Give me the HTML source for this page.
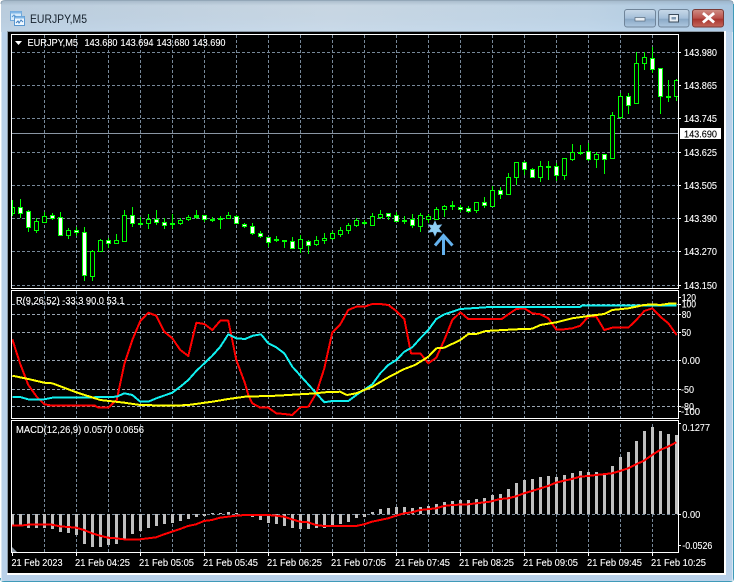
<!DOCTYPE html>
<html><head><meta charset="utf-8"><title>EURJPY,M5</title>
<style>html,body{margin:0;padding:0;background:#fff;width:736px;height:583px;overflow:hidden}svg{display:block}
text{font-family:"Liberation Sans",sans-serif;font-size:10.5px;fill:#fff;stroke:#fff;stroke-width:.12}</style></head><body>
<svg width="736" height="583" viewBox="0 0 736 583" xmlns="http://www.w3.org/2000/svg">
<defs>
<linearGradient id="h" x1="0" x2="1" y1="0" y2="0"><stop offset="0" stop-color="#c2d4e4"/><stop offset=".45" stop-color="#d3e0eb"/><stop offset=".8" stop-color="#c6dbec"/><stop offset="1" stop-color="#aecde8"/></linearGradient>
<linearGradient id="v" x1="0" x2="0" y1="0" y2="1"><stop offset="0" stop-color="#8fa3b5" stop-opacity=".55"/><stop offset=".15" stop-color="#8fa3b5" stop-opacity=".15"/><stop offset="1" stop-color="#b9d1ea" stop-opacity=".35"/></linearGradient>
<linearGradient id="btn" x1="0" x2="0" y1="0" y2="1"><stop offset="0" stop-color="#c8d9e9"/><stop offset=".5" stop-color="#a4bed8"/><stop offset=".55" stop-color="#8aa8c6"/><stop offset="1" stop-color="#aec8e0"/></linearGradient>
<linearGradient id="cls" x1="0" x2="0" y1="0" y2="1"><stop offset="0" stop-color="#cf8f86"/><stop offset=".5" stop-color="#b9504a"/><stop offset=".55" stop-color="#a8352e"/><stop offset="1" stop-color="#c4685c"/></linearGradient>
<clipPath id="pc"><rect x="12" y="421" width="666" height="131"/></clipPath>
</defs>
<rect x="1" y="1" width="732" height="580" rx="4" fill="#b9d1ea"/>
<rect x="1" y="1" width="732" height="31" fill="url(#h)"/>
<rect x="1" y="1" width="732" height="31" fill="url(#v)"/>
<path d="M1 4Q1 .5 5 .5H729Q733 .5 733 4" fill="none" stroke="#93a7b8"/>
<path d="M.5 578Q.5 581.500 4 581.500H730Q733.500 581.500 733.500 578V4" fill="none" stroke="#3f9ab8"/>
<rect x="1" y="32" width="1" height="549" fill="#d8e6f2"/>
<rect x="732" y="32" width="1" height="549" fill="#d8e6f2"/>
<rect x="7" y="31" width="719" height="544" fill="#fff"/>
<rect x="7" y="31" width="717" height="542" fill="#000"/>
<rect x="7" y="31" width="1" height="542" fill="#8a98a4"/>
<rect x="7" y="31" width="717" height="1" fill="#8a98a4"/>

<!-- title bar icon -->
<g shape-rendering="crispEdges">
<rect x="10.5" y="11.5" width="11" height="9" fill="#d6ebfb" stroke="#6fa7d8"/>
<rect x="10.5" y="11.5" width="11" height="2" fill="#7fb6e6"/>
<rect x="14.5" y="16.5" width="10" height="9" fill="#eef7ff" stroke="#5a97cf"/>
<rect x="14.5" y="16.5" width="10" height="2" fill="#7fb6e6"/>
</g>
<path d="M16 23l2-2 1 2 2-3 2 2" fill="none" stroke="#3f7fbf"/>
<path d="M12 17l2-2 2 2" fill="none" stroke="#5a97cf"/>
<text x="30" y="23" textLength="57" lengthAdjust="spacingAndGlyphs" style="font-size:12px;fill:#15202c;stroke:none">EURJPY,M5</text>

<!-- buttons -->
<rect x="624.5" y="9.5" width="31" height="17.5" rx="2.5" fill="url(#btn)" stroke="#6f8499"/>
<rect x="658.5" y="9.5" width="30.5" height="17.5" rx="2.5" fill="url(#btn)" stroke="#6f8499"/>
<rect x="692.5" y="9.5" width="31" height="17.5" rx="2.5" fill="url(#cls)" stroke="#7a3a36"/>
<rect x="635" y="17.5" width="10" height="3.5" fill="#e8eef4" stroke="#56687a" stroke-width=".7"/>
<rect x="669" y="14.5" width="9.5" height="7.5" fill="#e8eef4" stroke="#3c4c5c"/>
<rect x="671.5" y="17" width="4.5" height="2.5" fill="#7f98b0"/>
<path d="M704 14l9 7.500M713 14l-9 7.500" stroke="#fff" stroke-width="2.800" stroke-linecap="square"/>

<!-- grid -->
<g fill="none" stroke="#778899" stroke-dasharray="3 2" shape-rendering="crispEdges">
<path d="M44.500 35V288M76.500 35V288M108.500 35V288M140.500 35V288M172.500 35V288M204.500 35V288M236.500 35V288M268.500 35V288M300.500 35V288M332.500 35V288M364.500 35V288M396.500 35V288M428.500 35V288M460.500 35V288M492.500 35V288M524.500 35V288M556.500 35V288M588.500 35V288M620.500 35V288M652.500 35V288"/>
<path d="M44.500 291V418M76.500 291V418M108.500 291V418M140.500 291V418M172.500 291V418M204.500 291V418M236.500 291V418M268.500 291V418M300.500 291V418M332.500 291V418M364.500 291V418M396.500 291V418M428.500 291V418M460.500 291V418M492.500 291V418M524.500 291V418M556.500 291V418M588.500 291V418M620.500 291V418M652.500 291V418"/>
<path d="M44.500 424V552M76.500 424V552M108.500 424V552M140.500 424V552M172.500 424V552M204.500 424V552M236.500 424V552M268.500 424V552M300.500 424V552M332.500 424V552M364.500 424V552M396.500 424V552M428.500 424V552M460.500 424V552M492.500 424V552M524.500 424V552M556.500 424V552M588.500 424V552M620.500 424V552M652.500 424V552"/>
<path d="M12 52.500H678M12 85.500H678M12 118.500H678M12 152.500H678M12 185.500H678M12 218.500H678M12 251.500H678M12 285.500H678"/>
<path stroke="#9aa6b2" d="M12 304.500H678M12 314.500H678M12 332.500H678M12 360.500H678M12 389.500H678M12 406.500H678"/>
<path d="M12 514.500H678"/>
</g>
<path d="M12 133.500H678" stroke="#8a96a4" shape-rendering="crispEdges"/>

<!-- candles -->
<g shape-rendering="crispEdges" stroke="#00ff00" fill="none">
<path d="M12.500 200V216M20.500 199V218M28.500 210V232M36.500 218V233M44.500 212V223M52.500 213V220M60.500 212V236M68.500 228V239M76.500 227V236M84.500 227V281M92.500 250V281M100.500 239V252M108.500 238V248M116.500 234V243M124.500 210V241M132.500 207V227M140.500 217V225M148.500 214V229M156.500 210V225M164.500 218V229M172.500 214V229M180.500 218V225M188.500 215V221M196.500 210V219M204.500 215V222M212.500 217V222M220.500 216V229M228.500 212V219M236.500 215V224M244.500 223V228M252.500 223V235M260.500 231V238M268.500 237V247M276.500 236V242M284.500 240V248M292.500 237V249M300.500 235V253M308.500 240V254M316.500 236V246M324.500 233V244M332.500 231V240M340.500 227V237M348.500 223V234M356.500 218V227M364.500 220V225M372.500 213V225M380.500 210V219M388.500 213V220M396.500 212V222M404.500 216V224M412.500 214V228M420.500 213V232M428.500 214V223M436.500 207V219M444.500 205V217M452.500 201V210M460.500 205V212M468.500 206V213M476.500 202V213M484.500 197V208M492.500 186V206M500.500 187V199M508.500 173V195M516.500 162V185M524.500 161V175M532.500 168V178M540.500 161V182M548.500 161V180M556.500 163V181M564.500 158V180M572.500 144V161M580.500 145V155M588.500 143V161M596.500 152V168M604.500 154V174M612.500 112V158M620.500 93V119M628.500 93V114M636.500 52V104M644.500 52V70M652.500 47V73M660.500 68V114M668.500 80V102M676.500 79V101"/>
<path fill="#000" d="M12.500 207.500h2v6h-2zM34.500 221.500h4v9h-4zM42.500 216.500h4v6h-4zM66.500 230.500h4v5h-4zM90.500 251.500h4v25h-4zM98.500 240.500h4v11h-4zM114.500 240.500h4v3h-4zM122.500 215.500h4v26h-4zM146.500 219.500h4v4h-4zM178.500 220.500h4v3h-4zM186.500 217.500h4v2h-4zM226.500 215.500h4v3h-4zM298.500 239.500h4v9h-4zM314.500 240.500h4v4h-4zM322.500 238.500h4v2h-4zM330.500 233.500h4v5h-4zM338.500 230.500h4v4h-4zM346.500 225.500h4v5h-4zM354.500 220.500h4v5h-4zM370.500 216.500h4v9h-4zM378.500 214.500h4v3h-4zM418.500 215.500h4v11h-4zM426.500 216.500h4v3h-4zM434.500 209.500h4v10h-4zM442.500 206.500h4v3h-4zM474.500 202.500h4v8h-4zM490.500 190.500h4v16h-4zM506.500 177.500h4v17h-4zM514.500 162.500h4v15h-4zM538.500 166.500h4v11h-4zM562.500 158.500h4v17h-4zM570.500 152.500h4v7h-4zM594.500 154.500h4v5h-4zM610.500 115.500h4v43h-4zM618.500 96.500h4v21h-4zM634.500 63.500h4v40h-4zM642.500 57.500h4v6h-4zM674.500 80.500h4v16h-4z"/>
<path fill="#fff" d="M18.500 207.500h4v6h-4zM26.500 211.500h4v16h-4zM50.500 215.500h4v3h-4zM58.500 217.500h4v18h-4zM74.500 230.500h4v2h-4zM82.500 232.500h4v43h-4zM106.500 240.500h4v3h-4zM130.500 215.500h4v8h-4zM154.500 219.500h4v3h-4zM162.500 222.500h4v3h-4zM202.500 215.500h4v4h-4zM210.500 219.500h4v1h-4zM234.500 216.500h4v7h-4zM242.500 224.500h4v2h-4zM250.500 226.500h4v7h-4zM258.500 233.500h4v3h-4zM266.500 237.500h4v5h-4zM290.500 241.500h4v7h-4zM306.500 241.500h4v4h-4zM362.500 222.500h4v1h-4zM386.500 213.500h4v3h-4zM394.500 215.500h4v6h-4zM410.500 219.500h4v6h-4zM458.500 207.500h4v2h-4zM466.500 208.500h4v3h-4zM482.500 202.500h4v3h-4zM498.500 190.500h4v4h-4zM522.500 162.500h4v7h-4zM530.500 169.500h4v8h-4zM554.500 166.500h4v9h-4zM586.500 151.500h4v8h-4zM602.500 154.500h4v5h-4zM626.500 96.500h4v9h-4zM650.500 58.500h4v11h-4zM658.500 68.500h4v28h-4z"/>
<path fill="#00ff00" d="M138.500 223.500h4v1h-4zM170.500 223.500h4v1h-4zM194.500 215.500h4v2h-4zM218.500 218.500h4v1h-4zM274.500 239.500h4v1h-4zM282.500 240.500h4v1h-4zM402.500 220.500h4v1h-4zM450.500 205.500h4v1h-4zM546.500 166.500h4v1h-4zM578.500 152.500h4v1h-4zM666.500 96.500h4v1h-4z"/>
</g>

<!-- star and arrow -->
<polygon points="435,221 436.900,225.300 441.600,224.800 438.800,228.500 441.600,232.200 436.900,231.700 435,236 433.100,231.700 428.400,232.200 431.200,228.500 428.400,224.800 433.100,225.300" fill="#8fd0f4" stroke="#7abcec" stroke-width=".6"/>
<path d="M435 245.500L443.500 235.500L452.500 245.500M443.500 236V255" fill="none" stroke="#64b2ee" stroke-width="3"/>

<!-- indicator -->
<g fill="none" stroke-width="2" stroke-linejoin="round" shape-rendering="crispEdges">
<path stroke="#ff0000" d="M12.300 339.300L20 363.300L28.300 385L36.700 396.700L44.300 404.300L52.300 405.700L95 405.700L98.300 407.700L108.300 407.700L116.700 400L124.300 364.300L132.300 340L140.300 321L148.300 312.700L156.300 315.700L164.300 331.700L172.300 338.300L180.300 350L188.300 356L196.300 322.700L204.300 324L212.300 330L220.300 320.700L228.300 320.700L236.300 360L245 383.300L248.300 395L252.300 403.300L260.300 407.700L268.300 407.700L276.300 413.300L284.300 414L292.300 415L300.300 407.300L308.300 406.700L316.300 393.300L324.300 368.300L332.300 332.300L340.300 324.300L348.300 310L356.300 306.700L364.300 306.700L372.300 304L380.300 304L388.300 305L396.300 311L404.300 319L411 353.300L420.300 353.300L428.300 363.300L436.300 357.700L444.300 340L452.300 320L460.300 312.300L468.300 319L501.700 319L508.300 314.300L516.300 309L524.300 308.300L532.300 313.300L540.300 314.300L548.300 318.300L556.300 329.700L564.300 329.300L572.300 328.300L580.300 325.700L588.300 316.700L596.300 316.700L604.300 330L612.300 327.700L628.300 327.700L636.300 320L644.300 311L652.300 308.300L660.300 316.700L668.300 323.300L676.700 335"/>
<path stroke="#10f0f0" d="M12.300 397L20 397L28.300 399.300L44.300 399.300L52.300 397.700L76.300 397.700L116.700 396.700L124.300 393.300L132.300 395L140.300 401.700L148.300 401.700L156.300 398.300L172.300 392.700L180.300 386.700L188.300 380L196.300 371L212.300 355.700L220.300 346.700L228.300 334.300L236.300 338.300L245 339L253 335.700L261 334.300L268.300 343.300L276.300 347.300L284.300 353.300L292.300 366.700L316.300 393.300L324.300 402.300L332.300 401L348.300 401L356.300 395L372.300 384.300L380.300 373.300L388.300 365L396.300 360L404.300 351.700L412.300 347.300L420.300 338.300L428.300 330L436.300 319L444.300 314.300L452.300 311.700L460.300 309L490 307L580 307L581.700 305.700L676.700 305.700"/>
<path stroke="#ffff00" d="M12.300 375.700L28.300 379L44.300 382.700L52.300 383.300L76.300 392.300L100.300 400L124.300 402.700L140.300 405L172.300 405.700L188.300 405L212.300 401.700L228.300 399L245 396.700L276.700 395.700L316.300 393.300L324.300 392.300L340.300 391.700L347 395L356.300 393.300L372.300 386.700L388.300 377.300L404.300 369L415 365L428.300 356.700L436.300 348.300L444.300 347.700L460.300 340L468.300 334L476.300 334L485.700 331L516.300 329.300L532.300 328.700L540.300 325L556.300 322.300L572.300 318.300L588.300 316L604.300 314L612.300 310L628.300 308.300L644.300 305L652.300 304.300L660.300 305L668.300 303.700L676.700 303.700"/>
</g>

<!-- macd bars -->
<path clip-path="url(#pc)" fill="none" stroke="#c0c0c0" stroke-width="3" shape-rendering="crispEdges" d="M12.500 514V525M20.500 514V526M28.500 514V528M36.500 514V528M44.500 514V528M52.500 514V529M60.500 514V532M68.500 514V533M76.500 514V535M84.500 514V544M92.500 514V547M100.500 514V547M108.500 514V545M116.500 514V544M124.500 514V539M132.500 514V534M140.500 514V531M148.500 514V528M156.500 514V526M164.500 514V524M172.500 514V523M180.500 514V521M188.500 514V519M196.500 514V517M204.500 514V516M212.500 514V513M220.500 514V513M228.500 514V512M236.500 514V513M244.500 514V515M252.500 514V517M260.500 514V520M268.500 514V523M276.500 514V524M284.500 514V526M292.500 514V528M300.500 514V529M308.500 514V529M316.500 514V528M324.500 514V528M332.500 514V527M340.500 514V524M348.500 514V522M356.500 514V518M364.500 514V517M372.500 514V512M380.500 514V509M388.500 514V508M396.500 514V507M404.500 514V507M412.500 514V508M420.500 514V507M428.500 514V506M436.500 514V504M444.500 514V502M452.500 514V501M460.500 514V500M468.500 514V500M476.500 514V499M484.500 514V498M492.500 514V495M500.500 514V494M508.500 514V489M516.500 514V483M524.500 514V480M532.500 514V479M540.500 514V477M548.500 514V476M556.500 514V477M564.500 514V475M572.500 514V473M580.500 514V471M588.500 514V472M596.500 514V472M604.500 514V475M612.500 514V466M620.500 514V457M628.500 514V452M636.500 514V441M644.500 514V431M652.500 514V427M660.500 514V431M668.500 514V434M676.500 514V435"/>
<path fill="none" stroke="#ff0000" stroke-width="2" stroke-linejoin="round" shape-rendering="crispEdges" d="M12 525.700L20 525.700L28 524.700L52 524.700L60 526.300L76 527.700L84 530L92 533.300L100 535.700L108 537.700L116 538.300L124 539.300L140 539.300L148 538.300L156 537.300L164 534.300L172 531.700L180 529L188 526L196 524.300L204 521L212 520L220 517.700L228 516.700L236 515.700L245 515L268 515L276 515.700L284 516.700L292 519.300L300 521.700L308 522.300L316 525L324 526L356 526L364 524.300L372 521.700L388 518.300L396 515.700L404 513.300L412 512.300L420 510L436 508.300L444 506L452 505L468 504.300L476 503.300L490 501.700L500 499L508 498.300L516 496.300L524 493.300L532 491L548 486L556 482.700L564 480.700L572 479L580 476.700L588 476L596 475L612 473.300L620 471L628 468.300L636 464.300L644 460.700L652 455L660 450L668 446.700L676.300 442.300"/>
<polygon points="12,547 17,552 12,552" fill="#8a96a0"/>

<!-- panel borders -->
<g fill="none" stroke="#fff" shape-rendering="crispEdges">
<rect x="11.500" y="34.500" width="667" height="254"/>
<rect x="11.500" y="290.500" width="667" height="128"/>
<path d="M11.500 420.500H678.500V552.500H11.500Z"/>
<path d="M678 52.500h3M678 85.500h3M678 118.500h3M678 152.500h3M678 185.500h3M678 218.500h3M678 251.500h3M678 285.500h3M678 297.500h3M678 304.500h3M678 314.500h3M678 332.500h3M678 360.500h3M678 389.500h3M678 406.500h3M678 411.500h3M678 423.500h3M678 514.500h3M678 545.500h3"/>
<path d="M12.500 552v4M76.500 552v4M140.500 552v4M204.500 552v4M268.500 552v4M332.500 552v4M396.500 552v4M460.500 552v4M524.500 552v4M588.500 552v4M652.500 552v4"/>
</g>

<!-- chart text -->
<polygon points="15,41 22,41 18.500,45" fill="#fff"/>
<text x="27.500" y="46" textLength="50.500" lengthAdjust="spacingAndGlyphs">EURJPY,M5</text>
<text x="84.500" y="46" textLength="33" lengthAdjust="spacingAndGlyphs">143.680</text>
<text x="120.500" y="46" textLength="33" lengthAdjust="spacingAndGlyphs">143.694</text>
<text x="156.500" y="46" textLength="33" lengthAdjust="spacingAndGlyphs">143.680</text>
<text x="192.500" y="46" textLength="33" lengthAdjust="spacingAndGlyphs">143.690</text>
<text x="16" y="304" textLength="108.500" lengthAdjust="spacingAndGlyphs">R(9,26,52) -33.3 90.0 53.1</text>
<text x="16" y="433" textLength="128" lengthAdjust="spacingAndGlyphs">MACD(12,26,9) 0.0570 0.0656</text>

<text x="684" y="56" textLength="33" lengthAdjust="spacingAndGlyphs">143.980</text>
<text x="684" y="89" textLength="33" lengthAdjust="spacingAndGlyphs">143.865</text>
<text x="684" y="122" textLength="33" lengthAdjust="spacingAndGlyphs">143.745</text>
<text x="684" y="156" textLength="33" lengthAdjust="spacingAndGlyphs">143.625</text>
<text x="684" y="189" textLength="33" lengthAdjust="spacingAndGlyphs">143.505</text>
<text x="684" y="222" textLength="33" lengthAdjust="spacingAndGlyphs">143.390</text>
<text x="684" y="255" textLength="33" lengthAdjust="spacingAndGlyphs">143.270</text>
<text x="684" y="289" textLength="33" lengthAdjust="spacingAndGlyphs">143.150</text>
<rect x="680" y="128" width="41" height="11" fill="#fff"/>
<text x="684" y="137.500" textLength="33" lengthAdjust="spacingAndGlyphs" style="fill:#000;stroke:#000">143.690</text>

<text x="681.700" y="301" textLength="14.300" lengthAdjust="spacingAndGlyphs">120</text>
<text x="681.700" y="307.500" textLength="14.300" lengthAdjust="spacingAndGlyphs">100</text>
<text x="681.700" y="318" textLength="9.300" lengthAdjust="spacingAndGlyphs">80</text>
<text x="681.700" y="336" textLength="9.300" lengthAdjust="spacingAndGlyphs">50</text>
<text x="682" y="364" textLength="18" lengthAdjust="spacingAndGlyphs">0.00</text>
<text x="681" y="393" textLength="13" lengthAdjust="spacingAndGlyphs">-50</text>
<text x="681" y="410" textLength="13" lengthAdjust="spacingAndGlyphs">-80</text>
<text x="681" y="415" textLength="19" lengthAdjust="spacingAndGlyphs">-100</text>
<text x="682.300" y="431" textLength="27.700" lengthAdjust="spacingAndGlyphs">0.1277</text>
<text x="682.300" y="518" textLength="18" lengthAdjust="spacingAndGlyphs">0.00</text>
<text x="682.300" y="549" textLength="30" lengthAdjust="spacingAndGlyphs">-0.0526</text>

<text x="11.500" y="566" textLength="51" lengthAdjust="spacingAndGlyphs">21 Feb 2023</text>
<text x="75" y="566" textLength="55" lengthAdjust="spacingAndGlyphs">21 Feb 04:25</text>
<text x="139" y="566" textLength="55" lengthAdjust="spacingAndGlyphs">21 Feb 05:05</text>
<text x="203" y="566" textLength="55" lengthAdjust="spacingAndGlyphs">21 Feb 05:45</text>
<text x="267" y="566" textLength="55" lengthAdjust="spacingAndGlyphs">21 Feb 06:25</text>
<text x="331" y="566" textLength="55" lengthAdjust="spacingAndGlyphs">21 Feb 07:05</text>
<text x="395" y="566" textLength="55" lengthAdjust="spacingAndGlyphs">21 Feb 07:45</text>
<text x="459" y="566" textLength="55" lengthAdjust="spacingAndGlyphs">21 Feb 08:25</text>
<text x="523" y="566" textLength="55" lengthAdjust="spacingAndGlyphs">21 Feb 09:05</text>
<text x="587" y="566" textLength="55" lengthAdjust="spacingAndGlyphs">21 Feb 09:45</text>
<text x="651" y="566" textLength="55" lengthAdjust="spacingAndGlyphs">21 Feb 10:25</text>
</svg>
</body></html>
